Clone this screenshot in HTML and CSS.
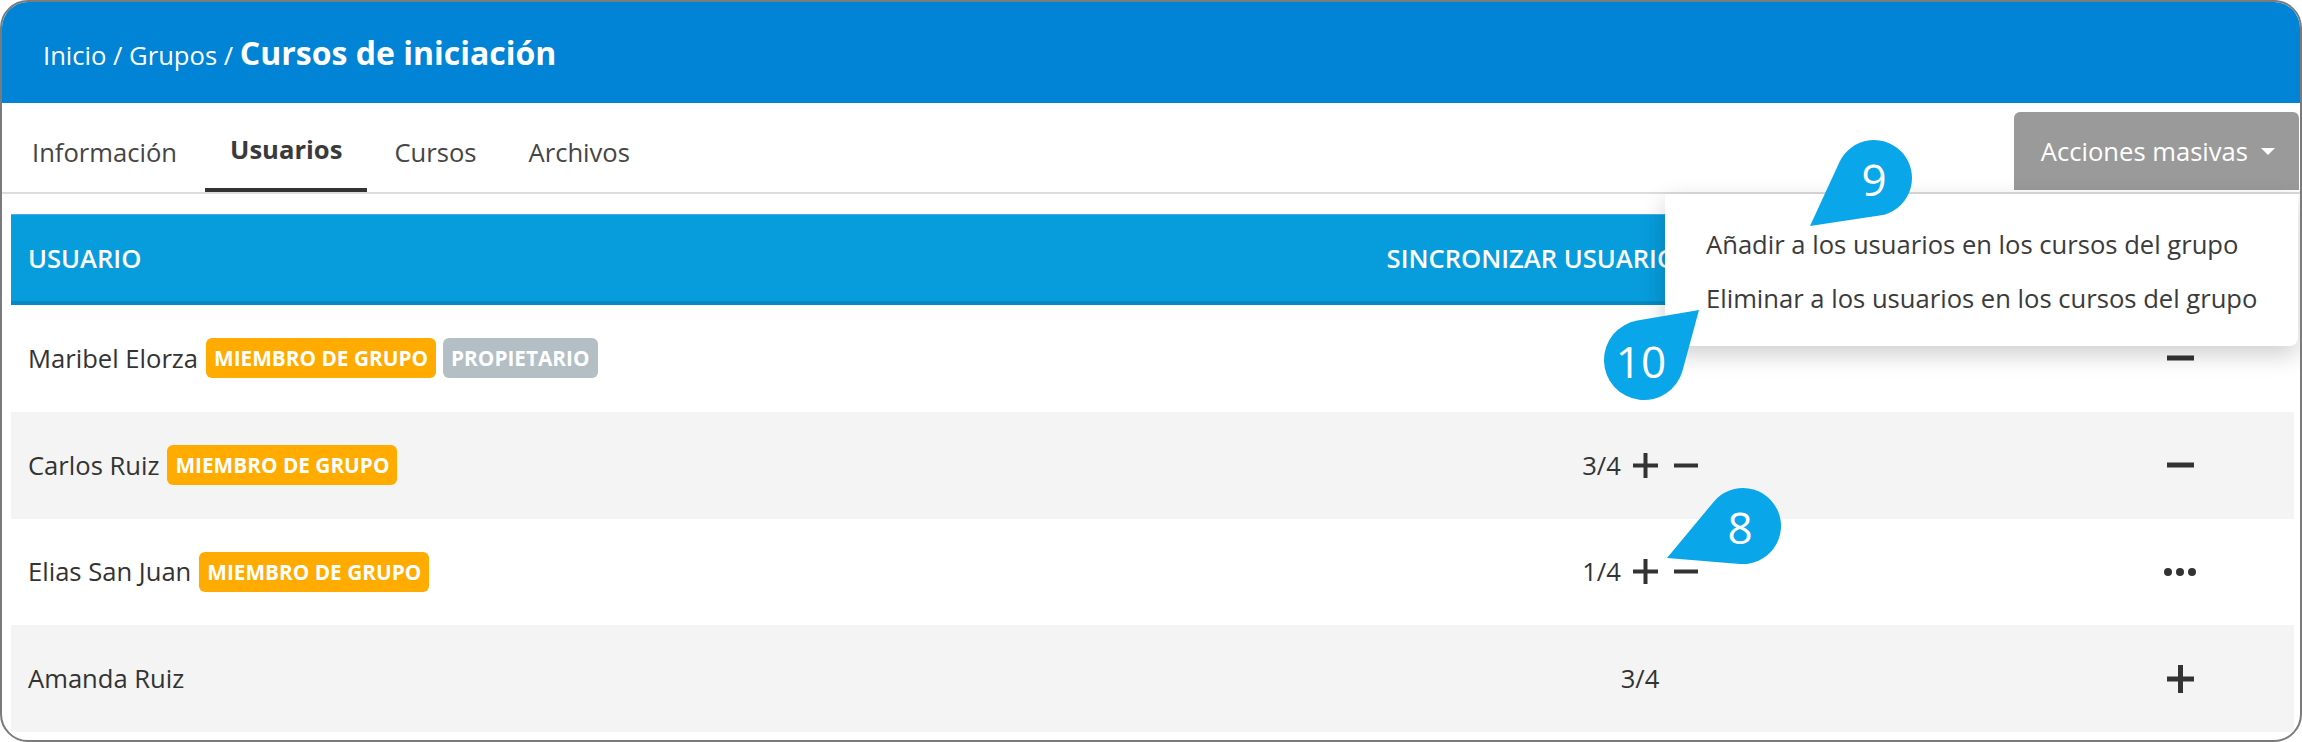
FILE: index.html
```html
<!DOCTYPE html>
<html lang="es">
<head>
<meta charset="utf-8">
<title>Cursos de iniciación</title>
<link rel="stylesheet" href="styles.css">
</head>
<body>
<div class="page">
  <div class="frame">
    <header class="topbar">
      <nav class="crumbs">Inicio / Grupos / <strong>Cursos de iniciación</strong></nav>
    </header>
    <div class="toolbar">
      <ul class="tabs">
        <li class="tab">Información</li>
        <li class="tab active">Usuarios</li>
        <li class="tab">Cursos</li>
        <li class="tab">Archivos</li>
      </ul>
      <div class="bulk">
        <button class="bulk-btn">Acciones masivas <span class="caret"></span></button>
        <div class="menu">
          <div class="menu-item">Añadir a los usuarios en los cursos del grupo</div>
          <div class="menu-item">Eliminar a los usuarios en los cursos del grupo</div>
        </div>
      </div>
    </div>
    <div class="content">
      <div class="table">
        <div class="row head">
          <div class="cell-user">USUARIO</div>
          <div class="cell-sync">SINCRONIZAR USUARIOS EN LOS CURSOS</div>
          <div class="cell-act"></div>
        </div>
        <div class="row">
          <div class="cell-user">Maribel Elorza <span class="badges"><span class="badge">MIEMBRO DE GRUPO</span><span class="badge owner">PROPIETARIO</span></span></div>
          <div class="cell-sync"></div>
          <div class="cell-act">
            <svg class="ico-lg" width="27" height="28" viewBox="0 0 27 28"><path d="M0 14H27" stroke="#333" stroke-width="5"/></svg>
          </div>
        </div>
        <div class="row alt">
          <div class="cell-user">Carlos Ruiz <span class="badges"><span class="badge">MIEMBRO DE GRUPO</span></span></div>
          <div class="cell-sync">
            <span class="count">3/4</span>
            <svg class="ico-sm plus" width="25" height="25" viewBox="0 0 25 25"><path d="M0 12.5H25M12.5 0V25" stroke="#333" stroke-width="4"/></svg>
            <svg class="ico-sm" width="24" height="25" viewBox="0 0 24 25"><path d="M0 12.5H24" stroke="#333" stroke-width="4"/></svg>
          </div>
          <div class="cell-act">
            <svg class="ico-lg" width="27" height="28" viewBox="0 0 27 28"><path d="M0 14H27" stroke="#333" stroke-width="5"/></svg>
          </div>
        </div>
        <div class="row">
          <div class="cell-user">Elias San Juan <span class="badges"><span class="badge">MIEMBRO DE GRUPO</span></span></div>
          <div class="cell-sync">
            <span class="count">1/4</span>
            <svg class="ico-sm plus" width="25" height="25" viewBox="0 0 25 25"><path d="M0 12.5H25M12.5 0V25" stroke="#333" stroke-width="4"/></svg>
            <svg class="ico-sm" width="24" height="25" viewBox="0 0 24 25"><path d="M0 12.5H24" stroke="#333" stroke-width="4"/></svg>
          </div>
          <div class="cell-act">
            <svg class="ico-lg" width="32" height="28" viewBox="0 0 32 28"><circle cx="4" cy="14" r="4" fill="#333"/><circle cx="16" cy="14" r="4" fill="#333"/><circle cx="28" cy="14" r="4" fill="#333"/></svg>
          </div>
        </div>
        <div class="row alt">
          <div class="cell-user">Amanda Ruiz</div>
          <div class="cell-sync"><span class="count">3/4</span></div>
          <div class="cell-act">
            <svg class="ico-lg" width="27" height="28" viewBox="0 0 27 28"><path d="M0 14H27M13.5 0V28" stroke="#333" stroke-width="5"/></svg>
          </div>
        </div>
      </div>
    </div>
  </div>
  <svg class="annot" width="2302" height="742" viewBox="0 0 2302 742">
    <path d="M1810 226 L1839.5 162.1 A38 38 0 1 1 1879.6 215.6 Z" fill="#0aa6ea"/>
    <text x="1874" y="179">9</text>
    <path d="M1699 310 L1682.6 370.4 A40 40 0 1 1 1637.3 320.6 Z" fill="#0aa6ea"/>
    <text x="1641" y="361">10</text>
    <path d="M1667 558 L1713.8 501.7 A38 38 0 1 1 1740 563.9 Z" fill="#0aa6ea"/>
    <text x="1740" y="527">8</text>
  </svg>
</div>
</body>
</html>
```
FILE: styles.css
```css
* { box-sizing: border-box; }

body {
  margin: 0;
  background: #fff;
  font-family: "Open Sans", "Noto Sans", sans-serif;
}

.page {
  position: relative;
  width: 2302px;
  height: 742px;
}

.frame {
  width: 2302px;
  height: 742px;
  border: 2px solid #7b7b7b;
  border-radius: 28px;
  overflow: hidden;
  display: flex;
  flex-direction: column;
  background: #fff;
}

.topbar {
  flex: none;
  height: 101px;
  background: #0284d6;
  display: flex;
  align-items: center;
  padding: 0 0 0 41px;
  color: #fff;
  font-size: 25.6px;
}

.crumbs strong {
  font-weight: 700;
  font-size: 32px;
}

.toolbar {
  flex: none;
  height: 91px;
  display: flex;
  border-bottom: 2px solid #dcdcdc;
  padding-left: 5px;
}

.tabs {
  display: flex;
  gap: 2px;
  list-style: none;
  margin: 0;
  padding: 0;
}

.tab {
  display: flex;
  align-items: center;
  padding: 13px 25px 0;
  border-bottom: 4px solid transparent;
  font-size: 25.6px;
  color: #454545;
}

.tab:first-child { margin-right: 1px; }

.tab.active {
  font-weight: 700;
  color: #3a3a3a;
  border-bottom-color: #333;
  padding-top: 7px;
}

.bulk {
  position: relative;
  margin-left: auto;
  margin-right: 1px;
  margin-top: 9px;
  height: 78px;
}

.bulk-btn {
  height: 100%;
  border: 0;
  background: #9a9a9a;
  color: #fff;
  font-family: inherit;
  font-size: 25.6px;
  border-radius: 6px 6px 0 0;
  padding: 0 24px 0 27px;
  display: flex;
  align-items: center;
  gap: 13px;
}

.caret {
  width: 0;
  height: 0;
  border-left: 7px solid transparent;
  border-right: 7px solid transparent;
  border-top: 7px solid #fff;
}

.menu {
  position: absolute;
  top: calc(100% + 4px);
  right: 1px;
  width: 633px;
  background: #fff;
  border-radius: 0 0 8px 8px;
  box-shadow: 0 8px 24px rgba(0, 0, 0, 0.2);
  padding: 24px 0 20px;
  z-index: 2;
}

.menu-item {
  padding: 0 41px;
  line-height: 54px;
  font-size: 25.6px;
  color: #3b3b3b;
  white-space: nowrap;
}

.content {
  flex: 1;
  padding: 20px 6px 8px 9px;
}

.row {
  display: grid;
  grid-template-columns: 1fr 852px 228px;
  height: 106.75px;
  align-items: center;
  font-size: 25.6px;
  color: #333;
}

.row.alt { background: #f4f4f4; }

.row.head {
  height: 91px;
  background: #079cdb;
  border-top: 1px solid #3cb0e6;
  border-bottom: 4px solid #0489c3;
  color: #fff;
  font-weight: 600;
}

.cell-user {
  padding-left: 17px;
  display: flex;
  align-items: center;
  gap: 8px;
  white-space: nowrap;
}

.badges {
  display: flex;
  gap: 7px;
}

.badge {
  display: inline-flex;
  align-items: center;
  height: 40px;
  padding: 0 8px;
  border-radius: 6px;
  background: #ffab00;
  color: #fff;
  font-size: 20.8px;
  font-weight: 700;
}

.badge.owner { background: #b3bec5; }

.cell-sync {
  display: flex;
  justify-content: center;
  align-items: center;
  gap: 12px;
  white-space: nowrap;
}

.cell-sync .ico-sm + .ico-sm { margin-left: 4px; }

.cell-act {
  display: flex;
  justify-content: center;
  align-items: center;
}

.annot {
  position: absolute;
  left: 0;
  top: 0;
  pointer-events: none;
  z-index: 5;
}

.annot text {
  fill: #fff;
  font-family: "Open Sans", "Noto Sans", sans-serif;
  font-size: 44px;
  text-anchor: middle;
  dominant-baseline: central;
}
```
